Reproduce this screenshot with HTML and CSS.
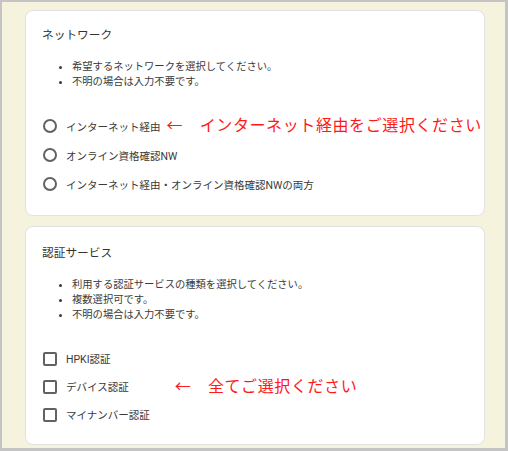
FILE: index.html
```html
<!DOCTYPE html>
<html lang="ja">
<head>
<meta charset="utf-8">
<link rel="stylesheet" href="styles.css">
</head>
<body>
<div class="frame">
  <section class="card card-net">
    <h2 class="title">ネットワーク</h2>
    <ul class="desc">
      <li>希望するネットワークを選択してください。</li>
      <li>不明の場合は入力不要です。</li>
    </ul>
    <div class="options radios">
      <div class="opt"><span class="radio"></span><span class="label">インターネット経由</span><span class="note note-1">←　インターネット経由をご選択ください</span></div>
      <div class="opt"><span class="radio"></span><span class="label">オンライン資格確認NW</span></div>
      <div class="opt"><span class="radio"></span><span class="label">インターネット経由・オンライン資格確認NWの両方</span></div>
    </div>
  </section>
  <section class="card card-auth">
    <h2 class="title">認証サービス</h2>
    <ul class="desc">
      <li>利用する認証サービスの種類を選択してください。</li>
      <li>複数選択可です。</li>
      <li>不明の場合は入力不要です。</li>
    </ul>
    <div class="options checks">
      <div class="opt"><span class="check"></span><span class="label">HPKI認証</span></div>
      <div class="opt"><span class="check"></span><span class="label">デバイス認証</span><span class="note note-2">←　全てご選択ください</span></div>
      <div class="opt"><span class="check"></span><span class="label">マイナンバー認証</span></div>
    </div>
  </section>
</div>
</body>
</html>
```
FILE: styles.css
```css
html, body {
  margin: 0;
  padding: 0;
}
body {
  width: 508px;
  height: 451px;
  overflow: hidden;
  font-family: Roboto, "Noto Sans CJK JP", sans-serif;
  color: #3a3a3a;
}
.frame {
  box-sizing: border-box;
  width: 508px;
  height: 451px;
  overflow: hidden;
  background: #f5f2de;
  border-style: solid;
  border-color: #c4c4c4;
  border-width: 2px 3px 3px 2px;
  padding: 8px 20px 0 23px;
  display: flex;
  flex-direction: column;
  gap: 10px;
}
.card {
  background: #fff;
  border: 1px solid #e2e2e2;
  border-radius: 8px;
  padding: 16px;
  flex: none;
}
.card-auth {
  padding-top: 18px;
  padding-bottom: 15px;
}
.title {
  margin: 0;
  font-weight: normal;
  font-size: 11.7px;
  line-height: 16px;
  color: #333;
}
.desc {
  margin: 16px 0 0 0;
  padding: 0 0 0 30px;
  font-size: 10.3px;
  line-height: 15px;
  list-style: disc;
}
.options {
  display: flex;
  flex-direction: column;
}
.radios {
  margin-top: 22.5px;
}
.checks {
  margin-top: 23px;
}
.opt {
  display: flex;
  align-items: center;
  font-size: 10.5px;
  white-space: nowrap;
}
.radios .opt {
  height: 29px;
}
.checks .opt {
  height: 28px;
}
.radio {
  box-sizing: border-box;
  width: 14px;
  height: 14px;
  border: 2px solid #626262;
  border-radius: 50%;
  margin-left: 0.5px;
  flex: none;
}
.check {
  box-sizing: border-box;
  width: 14px;
  height: 14px;
  border: 2px solid #626262;
  border-radius: 2px;
  margin-left: 1px;
  flex: none;
}
.label {
  margin-left: 9.5px;
}
.check + .label {
  margin-left: 9px;
}
.note {
  color: #ff1a1a;
  font-size: 16px;
  letter-spacing: 0.6px;
  line-height: 20px;
}
.note-1 {
  margin-left: 6px;
}
.note-2 {
  margin-left: 46px;
}
```
